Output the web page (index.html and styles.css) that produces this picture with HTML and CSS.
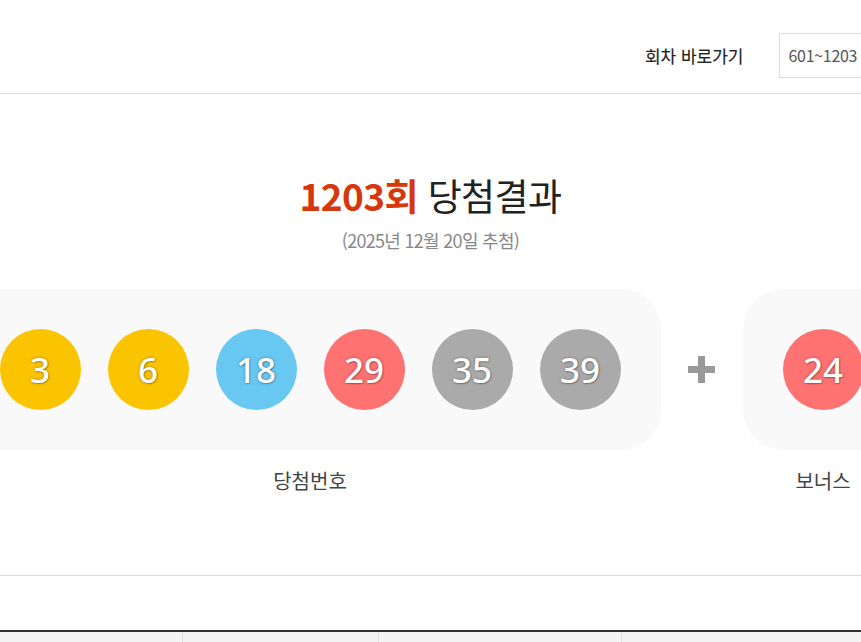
FILE: index.html
```html
<!DOCTYPE html>
<html lang="ko">
<head>
    <meta charset="UTF-8" />
    <meta name="viewport" content="width=device-width, initial-scale=1" />
    <title>당첨결과</title>
    <link rel="stylesheet" href="styles.css">
</head>
<body>

<div class="wrap">
<div class="page">

    <div class="top">
        <span class="jump-label">회차 바로가기</span>
        <div class="round-select">601~1203</div>
    </div>

    <div class="result">
        <h2 class="result-title"><strong>1203회</strong> 당첨결과</h2>
        <p class="result-date">(2025년 12월 20일 추첨)</p>

        <div class="balls-row">
            <div class="group">
                <div class="ball-box">
                    <span class="ball yellow">3</span>
                    <span class="ball yellow">6</span>
                    <span class="ball blue">18</span>
                    <span class="ball red">29</span>
                    <span class="ball gray">35</span>
                    <span class="ball gray">39</span>
                </div>
                <p class="group-label">당첨번호</p>
            </div>

            <div class="plus"><span></span></div>

            <div class="group">
                <div class="ball-box">
                    <span class="ball red">24</span>
                </div>
                <p class="group-label">보너스</p>
            </div>
        </div>
    </div>

    <!-- 순위별 당첨금 표 (머리행만 보임) -->
    <div class="prize-table">
        <div class="prize-head"></div>
        <div class="prize-head"></div>
        <div class="prize-head"></div>
        <div class="prize-head"></div>
    </div>

</div>
</div>

</body>
</html>
```

FILE: styles.css
```css
body {
    margin: 0;
    overflow: hidden;
    font-family: "Noto Sans CJK KR", "Noto Sans", sans-serif;
    color: #333;
    background: #fff;
}
.wrap {
    display: flex;
    justify-content: center;
}
.page {
    flex: 0 0 942px;
    width: 942px;
}
.top {
    height: 60px;
    padding-top: 33px;
    border-bottom: 1px solid #ddd;
    display: flex;
    justify-content: flex-end;
    align-items: flex-start;
}
.jump-label {
    font-size: 17px;
    font-weight: 400;
    color: #222;
    line-height: 45px;
    margin-right: 35px;
    -webkit-text-stroke: 0.15px #222;
}
.round-select {
    box-sizing: border-box;
    width: 123px;
    height: 45px;
    border: 1px solid #ddd;
    padding-left: 9px;
    font-size: 16px;
    line-height: 43px;
    color: #555;
    letter-spacing: -0.3px;
}
.result {
    padding: 76px 0 80px;
    border-bottom: 1px solid #ddd;
    text-align: center;
}
.result-title {
    margin: 0;
    font-size: 37px;
    line-height: 50px;
    font-weight: 400;
    color: #222;
    letter-spacing: -0.6px;
}
.result-title strong {
    color: #d5380b;
    font-weight: 700;
}
.result-date {
    margin: 8px 0 0;
    font-size: 18px;
    line-height: 24px;
    color: #888;
    letter-spacing: -0.7px;
}
.balls-row {
    margin-top: 37px;
    display: flex;
    align-items: flex-start;
}
.group {
    display: flex;
    flex-direction: column;
    align-items: center;
}
.ball-box {
    display: flex;
    gap: 28px;
    padding: 40px;
    background: #f9f9f9;
    border-radius: 40px;
}
.ball {
    width: 81px;
    height: 81px;
    border-radius: 50%;
    display: flex;
    align-items: center;
    justify-content: center;
    font-family: "Noto Sans", sans-serif;
    font-size: 35px;
    font-weight: 500;
    color: #fff;
    text-shadow: 0 0 3px rgba(0,0,0,0.35), 1px 1px 1px rgba(0,0,0,0.2);
}
.ball-box .ball + .ball {
    margin-left: -1px;
}
.yellow { background: #fbc400; }
.blue { background: #69c8f2; }
.red { background: #ff7272; }
.gray { background: #aaa; }
.group-label {
    margin: 17px 0 0;
    font-size: 20px;
    line-height: 28px;
    color: #444;
}
.plus {
    flex: 0 0 82px;
    height: 161px;
    display: flex;
    align-items: center;
    justify-content: center;
}
.plus span {
    position: relative;
    width: 27px;
    height: 27px;
}
.plus span::before,
.plus span::after {
    content: "";
    position: absolute;
    background: #999;
}
.plus span::before {
    left: 0;
    top: 10px;
    width: 27px;
    height: 7px;
}
.plus span::after {
    left: 10px;
    top: 0;
    width: 7px;
    height: 27px;
}
.prize-table {
    margin-top: 54px;
    border-top: 2px solid #333;
    display: grid;
    grid-template-columns: 222px 196px 243px 1fr;
}
.prize-head {
    background: #f4f4f4;
    height: 52px;
    border-left: 1px solid #ddd;
}
.prize-head:first-child {
    border-left: none;
}
```
